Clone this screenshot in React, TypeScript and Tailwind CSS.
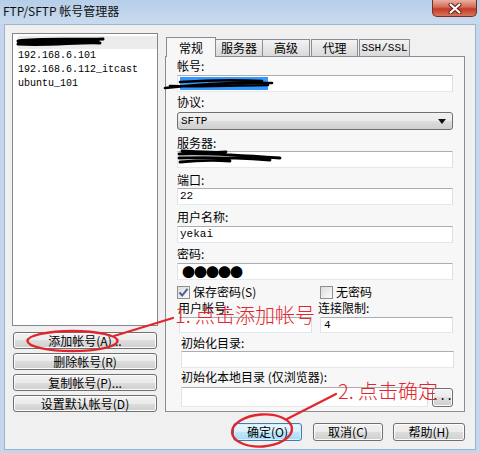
import React from "react";

const cjk = "font-['Noto_Sans_CJK_SC',sans-serif]";
const mono = "font-['Liberation_Mono',monospace]";
const field =
  "bg-white border border-[#abadb3] border-l-[#e2e3ea] border-r-[#dbdfe6] border-b-[#e3e9ef]";
const btn =
  "flex items-center justify-center rounded-[3px] border border-[#707070] bg-[linear-gradient(#f2f2f2,#ebebeb_50%,#dddddd_50%,#cfcfcf)] shadow-[inset_0_0_0_1px_#fcfcfc] text-[12px] leading-none";

function Label({ children, cls = "" }: { children: React.ReactNode; cls?: string }) {
  return <div className={`h-[16px] text-[12px] leading-[16px] ${cls}`}>{children}</div>;
}

function Check({ checked }: { checked?: boolean }) {
  return (
    <div className="w-[13px] h-[13px] border border-[#8e8f8f] bg-[linear-gradient(135deg,#dcdcdc,#fbfbfb)] flex items-center justify-center">
      {checked && (
        <svg width="11" height="11" viewBox="0 0 11 11">
          <path d="M1.5 5.5 L4.2 8.5 L9.5 1.8" fill="none" stroke="#4a5f97" strokeWidth="2" />
        </svg>
      )}
    </div>
  );
}

export default function App() {
  return (
    <div className={`relative w-[480px] h-[453px] overflow-hidden bg-[#c3d6eb] text-black ${cjk}`}>
      {/* title bar */}
      <div className="h-[24px] flex items-start bg-linear-to-b from-[#b7cee9] to-[#c8daee]">
        <div className="pl-[3px] pt-[1px] text-[12px] leading-[20px] text-[#111]">FTP/SFTP 帐号管理器</div>
        <div className="ml-auto mr-[3px] w-[45px] h-[17px] rounded-b-[5px] border border-t-0 border-[#7a2c25] bg-[linear-gradient(#eab0a2,#d46a55_45%,#c23a25_55%,#d8755c)] flex items-center justify-center">
          <svg width="14" height="11" viewBox="0 0 14 11">
            <path d="M2.5 1.5 L11.5 9.5 M11.5 1.5 L2.5 9.5" stroke="#5a1a14" strokeWidth="4" strokeLinecap="round" />
            <path d="M2.5 1.5 L11.5 9.5 M11.5 1.5 L2.5 9.5" stroke="#fff" strokeWidth="2.2" strokeLinecap="round" />
          </svg>
        </div>
      </div>

      {/* body */}
      <div className="mx-[4px] h-[426px] bg-[#f0f0f0] border border-[#9fb3c9] pl-[7px] pt-[8px] flex gap-[7px]">
        {/* left column */}
        <div className="w-[146px] flex flex-col">
          <div className={`h-[293px] bg-white border border-[#828790] pt-[1px] ${mono} text-[10px]`}>
            <div className="h-[14px] flex items-center pl-[5px]">
              <div className="w-full h-[13px] bg-[#ececec]" />
            </div>
            <div className="h-[14px] leading-[14px] pl-[5px]">192.168.6.101</div>
            <div className="h-[14px] leading-[14px] pl-[5px]">192.168.6.112_itcast</div>
            <div className="h-[14px] leading-[14px] pl-[5px]">ubuntu_101</div>
          </div>
          <div className="mt-[6px] mx-[1px] flex flex-col gap-[4px]">
            <div className={`h-[17px] ${btn}`}>添加帐号(A)...</div>
            <div className={`h-[17px] ${btn}`}>删除帐号(R)</div>
            <div className={`h-[17px] ${btn}`}>复制帐号(P)...</div>
            <div className={`h-[17px] ${btn}`}>设置默认帐号(D)</div>
          </div>
        </div>

        {/* right column */}
        <div className="w-[300px] mt-[4px] flex flex-col">
          <div className="h-[19px] flex items-end pl-[1px] relative z-10 text-[12px]">
            <div className="h-[20px] w-[50px] -mb-[1px] border border-b-0 border-[#898c95] bg-[#f7f7f7] flex items-center justify-center leading-none">常规</div>
            <div className="h-[17px] w-[47px] border border-b-0 border-l-0 border-[#898c95] bg-[linear-gradient(#f3f3f3,#e6e6e6_50%,#d9d9d9)] flex items-center justify-center leading-none">服务器</div>
            <div className="h-[17px] w-[47px] border border-b-0 border-l-0 border-[#898c95] bg-[linear-gradient(#f3f3f3,#e6e6e6_50%,#d9d9d9)] flex items-center justify-center leading-none">高级</div>
            <div className="h-[17px] w-[47px] ml-[1px] border border-b-0 border-[#898c95] bg-[linear-gradient(#f3f3f3,#e6e6e6_50%,#d9d9d9)] flex items-center justify-center leading-none">代理</div>
            <div className={`h-[17px] w-[51px] ml-[1px] border border-b-0 border-[#898c95] bg-[linear-gradient(#f3f3f3,#e6e6e6_50%,#d9d9d9)] flex items-center justify-center leading-none ${mono} text-[11px]`}>SSH/SSL</div>
          </div>
          <div className="h-[356px] border border-[#898c95] bg-[#f7f7f7] px-[11px] flex flex-col">
            <Label cls="mt-[1px]">帐号:</Label>
            <div className={`mt-[1px] h-[17px] ${field} flex items-center pl-[2px]`}>
              <div className="w-[88px] h-[13px] bg-[#3399ff]" />
            </div>
            <Label cls="mt-[2px]">协议:</Label>
            <div className={`mt-[2px] h-[18px] rounded-[3px] border border-[#707070] bg-[linear-gradient(#f2f2f2,#ebebeb_50%,#dddddd_50%,#cfcfcf)] flex items-center pl-[3px] pr-[6px] ${mono} text-[11px]`}>
              <span>SFTP</span>
              <svg className="ml-auto" width="8" height="5" viewBox="0 0 8 5">
                <path d="M0 0 L8 0 L4 5 Z" fill="#111" />
              </svg>
            </div>
            <Label cls="mt-[5px]">服务器:</Label>
            <div className={`h-[17px] ${field}`} />
            <Label cls="mt-[4px]">端口:</Label>
            <div className={`h-[17px] ${field} flex items-center pl-[2px] ${mono} text-[11px]`}>22</div>
            <Label cls="mt-[4px]">用户名称:</Label>
            <div className={`mt-[1px] h-[17px] ${field} flex items-center pl-[2px] ${mono} text-[11px]`}>yekai</div>
            <Label cls="mt-[3px]">密码:</Label>
            <div className={`mt-[1px] h-[17px] ${field} flex items-center pl-[4px] gap-[1px]`}>
              <span className="text-[13px] leading-none tracking-[-1px]">●●●●●</span>
            </div>
            <div className="mt-[4px] h-[16px] flex items-center text-[12px]">
              <div className="w-[143px] flex items-center gap-[3px]">
                <Check checked />
                <span>保存密码(S)</span>
              </div>
              <div className="flex items-center gap-[3px]">
                <Check />
                <span>无密码</span>
              </div>
            </div>
            <div className="h-[15px] flex text-[12px] leading-[15px]">
              <div className="w-[141px] pl-[1px]">用户帐号:</div>
              <div>连接限制:</div>
            </div>
            <div className="mt-[2px] h-[16px] flex">
              <div className={`ml-[2px] w-[133px] h-[16px] ${field}`} />
              <div className={`ml-[8px] flex-1 h-[16px] ${field} flex items-center pl-[3px] ${mono} text-[11px]`}>4</div>
            </div>
            <Label cls="mt-[2px] pl-[4px]">初始化目录:</Label>
            <div className={`ml-[4px] -mr-[1px] h-[17px] ${field}`} />
            <Label cls="mt-[1px] pl-[4px]">初始化本地目录 (仅浏览器):</Label>
            <div className="mt-[2px] h-[20px] flex items-start">
              <div className={`ml-[4px] flex-1 h-[20px] ${field}`} />
              <div className={`ml-[4px] w-[21px] h-[19px] mt-[1px] ${btn} items-end pb-[3px] ${mono} text-[10px]`}>...</div>
            </div>
          </div>
          <div className="mt-[11px] flex justify-end">
            <div className="w-[69px] h-[18px] flex items-center justify-center rounded-[3px] border border-[#3c7fb1] bg-[linear-gradient(#eaf6fd,#d9f0fc_50%,#bee6fd_50%,#a7d9f5)] shadow-[inset_0_0_0_1px_#d6f0fd] text-[12px] leading-none">确定(O)</div>
            <div className={`ml-[11px] w-[70px] h-[18px] ${btn}`}>取消(C)</div>
            <div className={`ml-[10px] w-[72px] h-[18px] ${btn}`}>帮助(H)</div>
          </div>
        </div>
      </div>

      {/* annotations */}
      <svg className="absolute left-0 top-0 pointer-events-none" width="480" height="453" viewBox="0 0 480 453">
        {/* list scribble */}
        <path d="M18 41 C 40 38, 70 40, 103 39 M 18 44 C 45 46, 80 42, 100 43 M 20 42 C 50 41, 75 44, 98 41" fill="none" stroke="#000" strokeWidth="3" strokeLinecap="round" />
        {/* account scribble */}
        <path d="M165 88 C 200 84, 240 82, 272 83 M 170 86 C 210 87, 245 85, 268 85 M 180 82 C 210 80, 240 80, 262 81" fill="none" stroke="#000" strokeWidth="2.6" strokeLinecap="round" />
        {/* server scribble */}
        <path d="M179 154 C 210 153, 240 155, 280 158 M 179 158 C 210 157, 240 158, 270 160 M 180 162 C 200 160, 215 160, 230 161 M 182 151 C 200 152, 215 153, 226 152" fill="none" stroke="#000" strokeWidth="2.8" strokeLinecap="round" />
        {/* ellipses and lines */}
        <ellipse cx="72.5" cy="341" rx="45" ry="10" fill="none" stroke="#e0262c" strokeWidth="2.4" />
        <path d="M114 336 L 173 318" stroke="#e0262c" strokeWidth="2.2" strokeLinecap="round" />
        <ellipse cx="262" cy="430.5" rx="30" ry="16" fill="none" stroke="#e0262c" strokeWidth="2.4" transform="rotate(-4 262 430.5)" />
        <path d="M287 419 L 336 394" stroke="#e0262c" strokeWidth="2.2" strokeLinecap="round" />
      </svg>
      <div className="absolute left-[175px] top-[304px] text-[20px] leading-[22px] text-[#e3262d] font-light pointer-events-none">1. 点击添加帐号</div>
      <div className="absolute left-[338px] top-[380px] text-[20px] leading-[22px] text-[#e3262d] font-light pointer-events-none">2. 点击确定</div>
    </div>
  );
}
